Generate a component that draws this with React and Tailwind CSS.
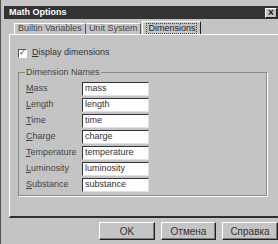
import React from "react";

const font = { fontFamily: '"Liberation Sans", Arial, sans-serif' };

function U({ children }) {
  return <span className="underline underline-offset-[1px]">{children}</span>;
}

const rows = [
  ["M", "ass", "mass"],
  ["L", "ength", "length"],
  ["T", "ime", "time"],
  ["C", "harge", "charge"],
  ["T", "emperature", "temperature"],
  ["L", "uminosity", "luminosity"],
  ["S", "ubstance", "substance"],
];

function Btn({ children, w }) {
  return (
    <div
      className={`${w} h-[18px] flex items-center justify-center border border-t-white border-l-white border-r-[#202020] border-b-[#202020] text-[10px] text-[#333] shadow-[inset_-1px_-1px_0_#7a7a7a]`}
    >
      {children}
    </div>
  );
}

export default function App() {
  return (
    <div
      style={font}
      className="w-[278px] h-[244px] bg-[#c4c4c4] flex flex-col pt-[6px] pl-[2px] overflow-hidden border-l border-l-[#505050]"
    >
      {/* Title bar */}
      <div className="h-[13px] ml-[1px] bg-[#333333] flex items-center justify-between pl-[5px] pr-[1px]">
        <span className="text-[9px] font-bold text-white leading-none">Math Options</span>
        <div className="w-[12px] h-[10px] bg-[#c4c4c4] border border-t-white border-l-white border-r-[#202020] border-b-[#202020] flex items-center justify-center text-[10px] leading-none font-bold text-[#111]">
          ×
        </div>
      </div>

      {/* Tabs */}
      <div className="mt-[2px] h-[13px] flex items-end pl-[11px] text-[9px] text-[#444]">
        <div className="h-[11px] px-[3px] flex items-center border-t border-l border-t-white border-l-white border-r border-r-[#555]">
          Builtin Variables
        </div>
        <div className="h-[11px] px-[3px] flex items-center border-t border-t-white border-r border-r-[#555]">
          Unit System
        </div>
        <div className="h-[13px] px-[3px] ml-[1px] flex items-center border-t border-l border-t-white border-l-white border-r border-r-[#222] text-[#222]">
          <span className="border border-dotted border-[#444] px-[1px] leading-[9px]">Dimensions</span>
        </div>
      </div>

      {/* Panel */}
      <div className="ml-[6px] h-[184px] border-l border-t border-l-white border-t-white border-b-2 border-b-[#303030] flex flex-col pl-[8px] pt-[13px]">
        <div className="flex items-center gap-[5px] h-[10px] text-[9px] text-[#333]">
          <div className="w-[9px] h-[9px] bg-white border border-t-[#555] border-l-[#555] border-r-white border-b-white flex items-center justify-center text-[8px] leading-none">
            ✓
          </div>
          <span>
            <U>D</U>isplay dimensions
          </span>
        </div>

        {/* Group box */}
        <div className="relative mt-[14px] mr-[11px] h-[124px] border border-[#8a8a8a] shadow-[1px_1px_0_#ffffff] pl-[7px] pt-[9px]">
          <span className="absolute -top-[6px] left-[6px] bg-[#c4c4c4] px-[1px] text-[9px] leading-[10px] text-[#444]">
            Dimension Names
          </span>
          <div className="flex flex-col gap-[2px]">
            {rows.map(([a, b, v]) => (
              <div key={b} className="flex items-center h-[14px]">
                <span className="w-[56px] text-[9px] text-[#444]">
                  <U>{a}</U>
                  {b}
                </span>
                <div className="w-[67px] h-[14px] bg-white border border-t-[#333] border-l-[#333] border-r-[#e0e0e0] border-b-[#e0e0e0] flex items-center pl-[2px] text-[9px] text-[#333]">
                  {v}
                </div>
              </div>
            ))}
          </div>
        </div>
      </div>

      {/* Buttons */}
      <div className="mt-[4px] flex justify-end gap-[6px]">
        <Btn w="w-[56px]">OK</Btn>
        <Btn w="w-[55px]">Отмена</Btn>
        <Btn w="w-[56px]">Справка</Btn>
      </div>
    </div>
  );
}
